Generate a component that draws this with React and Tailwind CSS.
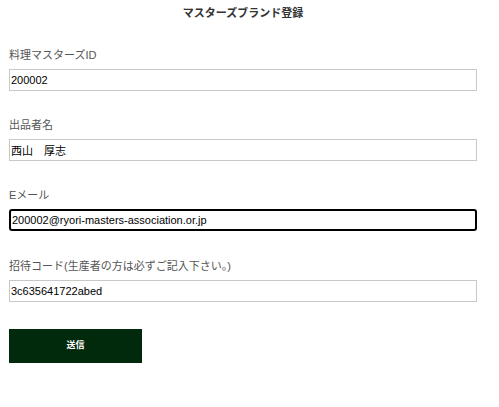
import React from "react";

const font = { fontFamily: '"Liberation Sans", Arial, "Noto Sans CJK JP", sans-serif' };

function Field({ label, value, focused, className = "" }) {
  return (
    <div className={className}>
      <div className="text-[11px] leading-[16px] text-[#555] mb-[6px]">{label}</div>
      <input
        readOnly
        value={value}
        className={
          "block w-[468px] h-[22px] px-[1px] text-[11px] text-black bg-white outline-none " +
          (focused ? "border-2 border-black rounded-[3px] px-0" : "border border-[#c8c8c8]")
        }
        style={font}
      />
    </div>
  );
}

export default function App() {
  return (
    <div className="w-[499px] h-[407px] bg-white pl-[9px] pt-[5px]" style={font}>
      <div className="w-[468px] text-center text-[11px] leading-[16px] font-bold text-[#333]">
        マスターズブランド登録
      </div>
      <Field className="mt-[26px]" label="料理マスターズID" value="200002" />
      <Field className="mt-[26px]" label="出品者名" value="西山　厚志" />
      <Field className="mt-[26px]" label="Eメール" value="200002@ryori-masters-association.or.jp" focused />
      <Field className="mt-[27px]" label="招待コード(生産者の方は必ずご記入下さい。)" value="3c635641722abed" />
      <button className="mt-[27px] w-[133px] h-[34px] bg-[#012a0c] text-white text-[9px] font-bold flex items-center justify-center">
        送信
      </button>
    </div>
  );
}
